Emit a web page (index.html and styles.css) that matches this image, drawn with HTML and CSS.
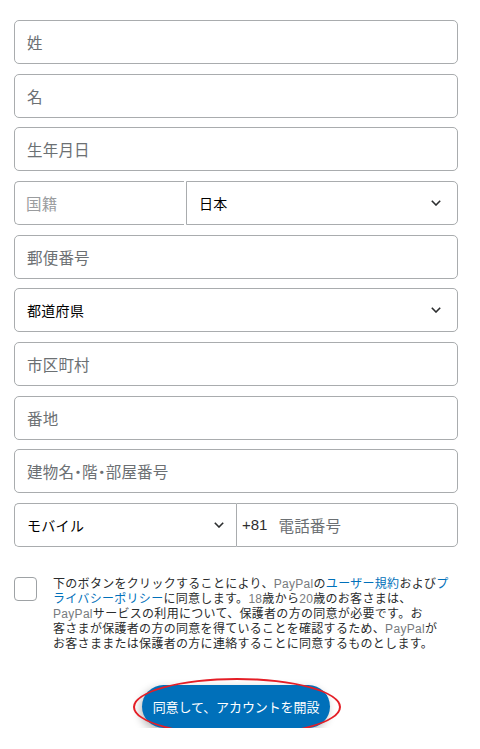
FILE: index.html
```html
<!DOCTYPE html>
<html lang="ja">
<head>
<meta charset="utf-8">
<title>アカウント情報</title>
<link rel="stylesheet" href="styles.css">
</head>
<body>
<main class="form">
  <div class="field"><span class="ph">姓</span></div>
  <div class="field"><span class="ph">名</span></div>
  <div class="field"><span class="ph">生年月日</span></div>
  <div class="row">
    <div class="field nat-label"><span class="ph light">国籍</span></div>
    <div class="field select nat-select"><span class="val">日本</span>
      <svg class="chev" width="10" height="6" viewBox="0 0 10 6"><path d="M0.8 0.8L5 5L9.2 0.8" /></svg>
    </div>
  </div>
  <div class="field"><span class="ph">郵便番号</span></div>
  <div class="field select"><span class="val">都道府県</span>
    <svg class="chev" width="10" height="6" viewBox="0 0 10 6"><path d="M0.8 0.8L5 5L9.2 0.8" /></svg>
  </div>
  <div class="field"><span class="ph">市区町村</span></div>
  <div class="field"><span class="ph">番地</span></div>
  <div class="field"><span class="ph narrow">建物名・階・部屋番号</span></div>
  <div class="row">
    <div class="field select phone-type"><span class="val">モバイル</span>
      <svg class="chev" width="10" height="6" viewBox="0 0 10 6"><path d="M0.8 0.8L5 5L9.2 0.8" /></svg>
    </div>
    <div class="field phone"><span class="code">+81</span><span class="ph">電話番号</span></div>
  </div>

  <div class="consent">
    <span class="checkbox"></span>
    <p class="terms">下のボタンをクリックすることにより、<span class="lat">PayPal</span>の<a class="link">ユーザー規約</a>および<a class="link">プ<br>ライバシーポリシー</a>に同意します。<span class="lat">18</span>歳から<span class="lat">20</span>歳のお客さまは、<br><span class="lat">PayPal</span>サービスの利用について、保護者の方の同意が必要です。お<br>客さまが保護者の方の同意を得ていることを確認するため、<span class="lat">PayPal</span>が<br>お客さままたは保護者の方に連絡することに同意するものとします。</p>
  </div>

  <div class="cta">
    <button class="submit">同意して、アカウントを開設</button>
    <span class="ring"></span>
  </div>
</main>
</body>
</html>
```

FILE: styles.css
```css
html, body {
  margin: 0;
  padding: 0;
  background: #ffffff;
}

body {
  font-family: "Liberation Sans", "Noto Sans CJK JP", sans-serif;
  color: #2c2e2f;
}

.form {
  width: 444px;
  margin-left: 14px;
  padding-top: 20px;
  display: flex;
  flex-direction: column;
  gap: 9.67px;
}

.field {
  box-sizing: border-box;
  height: 44px;
  border: 1px solid #a9acae;
  border-radius: 5px;
  display: flex;
  align-items: center;
  padding: 0 12px;
  background: #fff;
}

.ph {
  font-size: 15.5px;
  color: #6c7073;
  letter-spacing: 0.2px;
}

.ph.narrow {
  font-feature-settings: "halt";
}

.ph.light {
  color: #9a9c9e;
}

.val {
  font-size: 14px;
  color: #000000;
  font-weight: 400;
  letter-spacing: 0.3px;
}

.select {
  justify-content: space-between;
  padding-right: 16px;
}

.chev path {
  fill: none;
  stroke: #2c2e2f;
  stroke-width: 1.6;
}

.row {
  display: flex;
  height: 44px;
}

.nat-label {
  width: 170px;
  flex: none;
  border-right: none;
  border-radius: 5px 0 0 5px;
  padding-left: 11px;
}

.nat-select {
  flex: 1;
  margin-left: 2px;
  border-radius: 0 5px 5px 0;
  padding-left: 12px;
}

.phone-type {
  width: 222px;
  flex: none;
  border-right: none;
  border-radius: 5px 0 0 5px;
  padding-left: 12px;
  padding-right: 12px;
}

.phone {
  flex: 1;
  border-radius: 0 5px 5px 0;
  padding-left: 5px;
}

.code {
  font-size: 15px;
  color: #2c2e2f;
  margin-right: 11px;
}

.consent {
  display: flex;
  align-items: flex-start;
  gap: 16px;
  margin-top: 20px;
}

.checkbox {
  box-sizing: border-box;
  width: 23px;
  height: 24px;
  flex: none;
  border: 1px solid #9ea2a5;
  border-radius: 4px;
  background: #fff;
}

.terms {
  margin: 0;
  font-size: 12px;
  line-height: 15px;
  letter-spacing: 0.3px;
  color: #2a2c2d;
  white-space: nowrap;
}

.lat {
  color: #777b7e;
}

.link {
  color: #0070ba;
  text-decoration: none;
}

.cta {
  position: relative;
  display: flex;
  justify-content: center;
  margin-top: 24px;
}

.submit {
  width: 188px;
  height: 43px;
  border: none;
  border-radius: 22px;
  background: #0070ba;
  color: #ffffff;
  font-family: "Liberation Sans", "Noto Sans CJK JP", sans-serif;
  font-size: 13px;
  letter-spacing: -0.1px;
  box-shadow: -2px 3px 8px rgba(0, 0, 0, 0.28);
  padding: 0;
}

.ring {
  position: absolute;
  left: 50%;
  top: -7px;
  width: 208px;
  height: 58px;
  margin-left: -103px;
  box-sizing: border-box;
  border: 2px solid #e41e26;
  border-radius: 50%;
}
```
